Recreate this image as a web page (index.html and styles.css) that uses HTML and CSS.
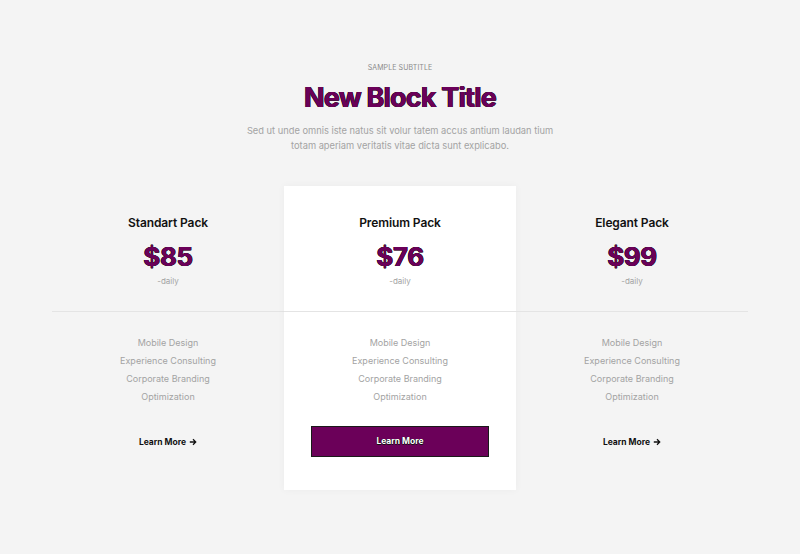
FILE: index.html
```html
<!DOCTYPE html>
<html lang="en">
<head>
<meta charset="utf-8">
<title>Pricing</title>
<link rel="stylesheet" href="styles.css">
</head>
<body>
<section class="pricing">
  <header class="head">
    <p class="subtitle">SAMPLE SUBTITLE</p>
    <h1 class="title">New Block Title</h1>
    <p class="lead">Sed ut unde omnis iste natus sit volur tatem accus antium laudan tium totam aperiam veritatis vitae dicta sunt explicabo.</p>
  </header>
  <div class="plans">
    <div class="plan">
      <div class="plan-top">
        <h2 class="plan-name">Standart Pack</h2>
        <div class="price">$85</div>
        <div class="period">-daily</div>
      </div>
      <div class="plan-body">
        <ul class="features">
          <li>Mobile Design</li>
          <li>Experience Consulting</li>
          <li>Corporate Branding</li>
          <li>Optimization</li>
        </ul>
        <a class="link" href="#">Learn More <svg class="arrow" viewBox="0 0 10 10" width="8" height="8"><path d="M1 5h7M5 1.6 8.4 5 5 8.4" fill="none" stroke="#111" stroke-width="1.6"/></svg></a>
      </div>
    </div>
    <div class="plan featured">
      <div class="plan-top">
        <h2 class="plan-name">Premium Pack</h2>
        <div class="price">$76</div>
        <div class="period">-daily</div>
      </div>
      <div class="plan-body">
        <ul class="features">
          <li>Mobile Design</li>
          <li>Experience Consulting</li>
          <li>Corporate Branding</li>
          <li>Optimization</li>
        </ul>
        <a class="btn" href="#">Learn More</a>
      </div>
    </div>
    <div class="plan">
      <div class="plan-top">
        <h2 class="plan-name">Elegant Pack</h2>
        <div class="price">$99</div>
        <div class="period">-daily</div>
      </div>
      <div class="plan-body">
        <ul class="features">
          <li>Mobile Design</li>
          <li>Experience Consulting</li>
          <li>Corporate Branding</li>
          <li>Optimization</li>
        </ul>
        <a class="link" href="#">Learn More <svg class="arrow" viewBox="0 0 10 10" width="8" height="8"><path d="M1 5h7M5 1.6 8.4 5 5 8.4" fill="none" stroke="#111" stroke-width="1.6"/></svg></a>
      </div>
    </div>
  </div>
</section>
</body>
</html>
```
FILE: styles.css
```css
* { box-sizing: border-box; }
html, body { margin: 0; padding: 0; }
body {
  background: #f4f4f4;
  font-family: Inter, "Noto Sans", "Liberation Sans", sans-serif;
  color: #111;
  width: 800px;
  height: 554px;
  overflow: hidden;
}
.pricing { padding-top: 63px; }
.head { text-align: center; }
.subtitle {
  margin: 0;
  font-size: 7px;
  line-height: 10px;
  color: #8a8a8a;
  letter-spacing: 0.1px;
}
.title {
  margin: 7px 0 0;
  font-size: 27px;
  line-height: 36px;
  font-weight: 700;
  letter-spacing: -0.8px;
  color: #6b0059;
  text-shadow: 0.45px 0 #1d1d1d, -0.45px 0 #1d1d1d, 0 0.45px #1d1d1d, 0 -0.45px #1d1d1d;
}
.lead {
  margin: 7px auto 0;
  width: 320px;
  font-size: 9.3px;
  line-height: 15px;
  color: #a3a3a3;
}
.plans {
  display: grid;
  grid-template-columns: repeat(3, 232px);
  width: 696px;
  margin: 33px auto 0;
}
.plan { text-align: center; height: 304px; }
.plan.featured {
  background: #fff;
  box-shadow: 0 0 8px rgba(0,0,0,0.04);
}
.plan-top {
  height: 126px;
  border-bottom: 1px solid #e4e4e4;
  padding-top: 29px;
}
.plan-name {
  margin: 0;
  font-size: 12px;
  line-height: 16px;
  font-weight: 600;
  color: #111;
  letter-spacing: -0.1px;
}
.price {
  margin-top: 9px;
  font-size: 26px;
  line-height: 34px;
  font-weight: 700;
  color: #6b0059;
  letter-spacing: -0.4px;
  text-shadow: 0.45px 0 #1d1d1d, -0.45px 0 #1d1d1d, 0 0.45px #1d1d1d, 0 -0.45px #1d1d1d;
}
.period {
  margin-top: 2px;
  font-size: 8px;
  line-height: 10px;
  color: #a3a3a3;
}
.plan-body { padding-top: 22px; }
.features {
  list-style: none;
  margin: 0;
  padding: 0;
}
.features li {
  font-size: 9px;
  line-height: 18px;
  color: #a3a3a3;
}
.link {
  display: inline-flex;
  align-items: center;
  gap: 3px;
  margin-top: 30px;
  font-size: 8.5px;
  line-height: 12px;
  font-weight: 700;
  color: #111;
  text-decoration: none;
}
.btn {
  display: block;
  width: 178px;
  height: 31px;
  margin: 20px auto 0;
  background: #6b0059;
  border: 1px solid #1a1a1a;
  color: #fff;
  font-size: 8.5px;
  line-height: 29px;
  font-weight: 700;
  text-decoration: none;
  text-shadow: 0.5px 0 #111, -0.5px 0 #111, 0 0.5px #111, 0 -0.5px #111;
}
```
